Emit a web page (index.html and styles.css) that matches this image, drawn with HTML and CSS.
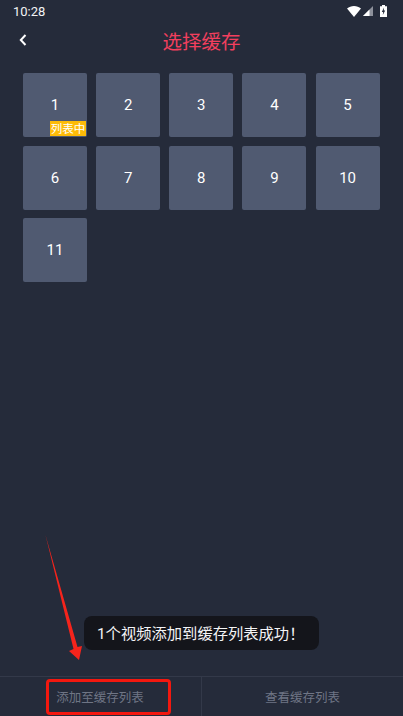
FILE: index.html
```html
<!DOCTYPE html>
<html lang="zh">
<head>
<meta charset="utf-8">
<title>选择缓存</title>
<link rel="stylesheet" href="styles.css">
</head>
<body>
<div class="page">
  <div class="status">
    <span class="time">10:28</span>
    <span class="status-icons">
      <svg class="wifi" width="14" height="11" viewBox="0 0 14 11"><path d="M0 2.6C2 .9 4.4 0 7 0s5 .9 7 2.6L7 11z" fill="#fff"/></svg>
      <svg class="signal" width="10" height="10" viewBox="0 0 10 10"><path d="M10 0v10H0z" fill="#8d919b"/><path d="M6.5 3.5V10H0z" fill="#fff"/></svg>
      <svg class="battery" width="7" height="12" viewBox="0 0 7 12"><path d="M2 0h3v1.2h2V12H0V1.2h2z" fill="#fff"/><path d="M4 2.5 1.8 7h1.4L2.8 10 5.2 5.6H3.8z" fill="#252b3a"/></svg>
    </span>
  </div>
  <header class="head">
    <svg class="back" width="8" height="12" viewBox="0 0 8 12"><path d="M6.5 1 1.8 6l4.7 5" fill="none" stroke="#fff" stroke-width="2"/></svg>
    <h1 class="title">选择缓存</h1>
  </header>
  <main class="grid">
    <div class="cell">1<span class="tag">列表中</span></div>
    <div class="cell">2</div>
    <div class="cell">3</div>
    <div class="cell">4</div>
    <div class="cell">5</div>
    <div class="cell">6</div>
    <div class="cell">7</div>
    <div class="cell">8</div>
    <div class="cell">9</div>
    <div class="cell">10</div>
    <div class="cell">11</div>
  </main>
  <footer class="tabs">
    <div class="tab tab-first"><span class="mark"></span>添加至缓存列表</div>
    <div class="tab">查看缓存列表</div>
  </footer>
  <div class="toast">1个视频添加到缓存列表成功！</div>
  <svg class="arrow" width="40" height="130" viewBox="0 0 40 130"><path d="M0.5 1 32.5 113 37 112 34 126 24 117 28.5 115z" fill="#f5241c"/></svg>
</div>
</body>
</html>
```
FILE: styles.css
```css
* { box-sizing: border-box; }
html, body { margin: 0; padding: 0; }
body {
  background: #252b3a;
  font-family: Roboto, "Noto Sans CJK SC", sans-serif;
  color: #fff;
}
.page {
  position: relative;
  width: 403px;
  height: 716px;
  display: flex;
  flex-direction: column;
  overflow: hidden;
}
.status {
  height: 22px;
  padding: 0 16px 0 13px;
  display: flex;
  align-items: center;
  justify-content: space-between;
}
.time { font-size: 13px; color: #f2f3f5; }
.status-icons { display: flex; align-items: center; gap: 2px; }
.battery { margin-left: 5px; }
.head {
  height: 40px;
  padding-bottom: 4px;
  position: relative;
  display: flex;
  align-items: center;
  justify-content: center;
}
.back { position: absolute; left: 19px; top: 12px; }
.title {
  margin: 0;
  font-size: 19.5px;
  font-weight: 400;
  color: #f23f5e;
}
.grid {
  flex: 1;
  padding: 11px 23px 0;
  display: grid;
  grid-template-columns: repeat(5, 64px);
  grid-auto-rows: 64px;
  column-gap: 9.15px;
  row-gap: 8.5px;
  align-content: start;
}
.cell {
  position: relative;
  display: flex;
  align-items: center;
  justify-content: center;
  background: #505a71;
  border-radius: 2px;
  font-size: 15px;
  color: #fff;
}
.tag {
  position: absolute;
  right: 1px;
  bottom: 1px;
  width: 36px;
  height: 15px;
  background: #fdbb08;
  font-size: 11.5px;
  line-height: 16px;
  text-align: center;
  white-space: nowrap;
  overflow: hidden;
}
.tabs {
  height: 40px;
  display: flex;
  border-top: 1px solid #333949;
}
.tab {
  flex: 1;
  position: relative;
  display: flex;
  align-items: center;
  justify-content: center;
  font-size: 12.5px;
  color: #6f7585;
}
.tab-first {
  flex: 0 0 202px;
  border-right: 1px solid #333949;
  padding-right: 1px;
}
.mark {
  position: absolute;
  left: 46px;
  top: 2px;
  width: 125px;
  height: 36px;
  border: 3px solid #f3180f;
  border-radius: 4px;
}
.toast {
  position: absolute;
  left: 84px;
  top: 616px;
  width: 235px;
  height: 34px;
  padding: 0 0 3px 13px;
  background: #14151b;
  border-radius: 8px;
  display: flex;
  align-items: center;
  font-size: 15.3px;
  color: #f4f4f6;
  white-space: nowrap;
}
.arrow { position: absolute; left: 45px; top: 534px; }
```
